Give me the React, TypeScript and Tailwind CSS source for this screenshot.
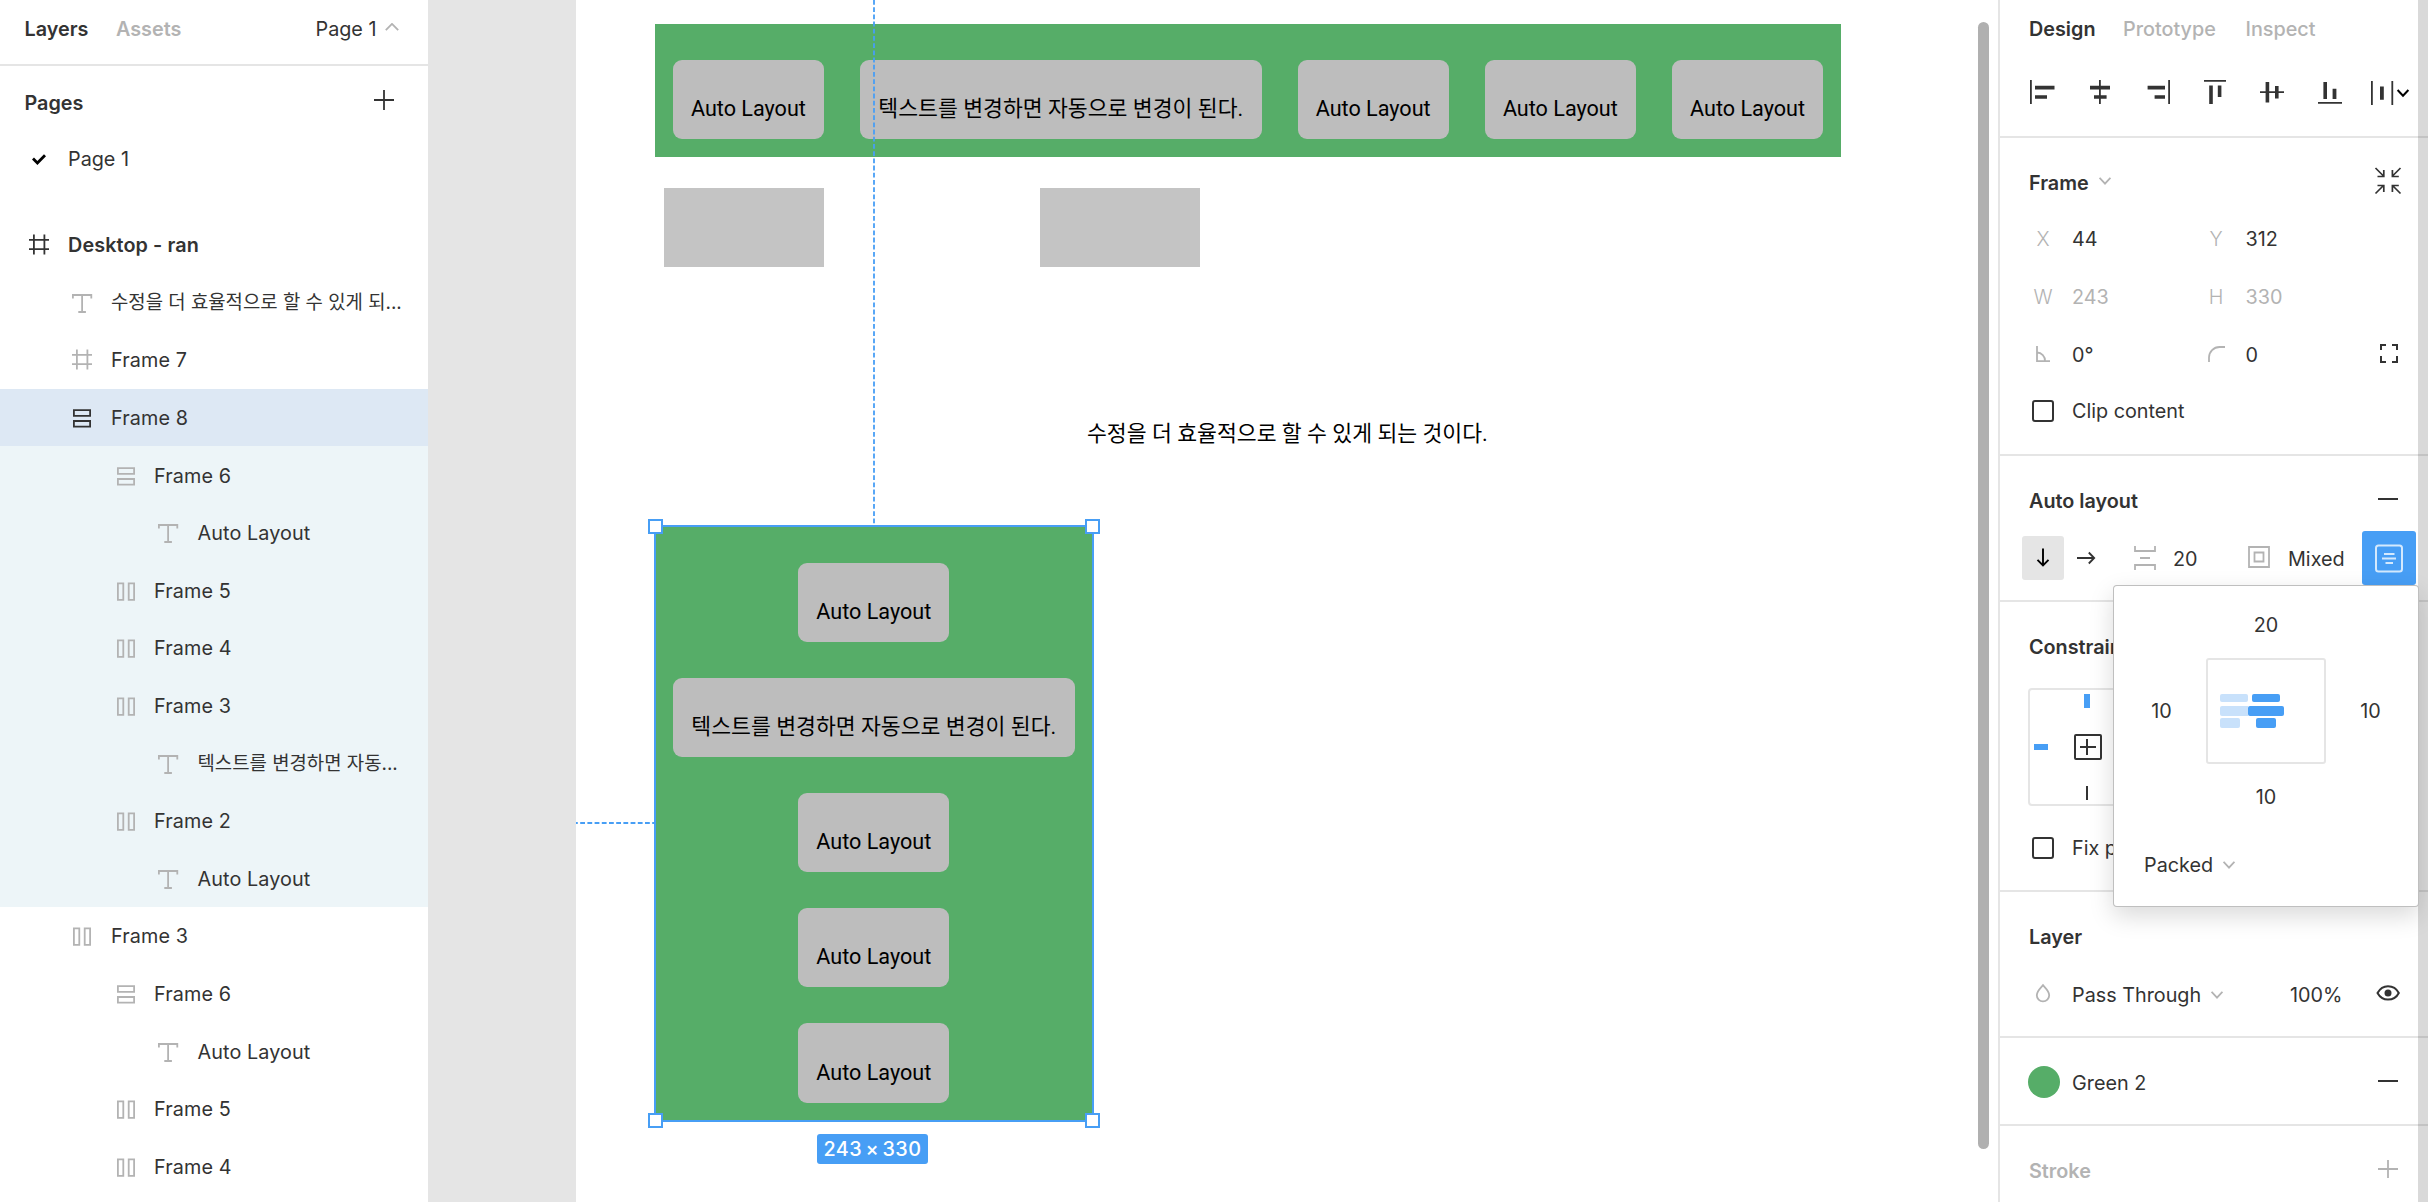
import type { ReactNode } from "react";
import clsx from "clsx";

type LayerKind = "frame" | "text" | "vertical" | "horizontal";

type LayerItem = {
  name: string;
  kind: LayerKind;
  depth: 0 | 1 | 2 | 3;
  state?: "selected" | "child";
  korean?: boolean;
};

const LAYERS: LayerItem[] = [
  { name: "Desktop - ran", kind: "frame", depth: 0 },
  { name: "수정을 더 효율적으로 할 수 있게 되...", kind: "text", depth: 1, korean: true },
  { name: "Frame 7", kind: "frame", depth: 1 },
  { name: "Frame 8", kind: "vertical", depth: 1, state: "selected" },
  { name: "Frame 6", kind: "vertical", depth: 2, state: "child" },
  { name: "Auto Layout", kind: "text", depth: 3, state: "child" },
  { name: "Frame 5", kind: "horizontal", depth: 2, state: "child" },
  { name: "Frame 4", kind: "horizontal", depth: 2, state: "child" },
  { name: "Frame 3", kind: "horizontal", depth: 2, state: "child" },
  { name: "텍스트를 변경하면 자동...", kind: "text", depth: 3, state: "child", korean: true },
  { name: "Frame 2", kind: "horizontal", depth: 2, state: "child" },
  { name: "Auto Layout", kind: "text", depth: 3, state: "child" },
  { name: "Frame 3", kind: "horizontal", depth: 1 },
  { name: "Frame 6", kind: "vertical", depth: 2 },
  { name: "Auto Layout", kind: "text", depth: 3 },
  { name: "Frame 5", kind: "horizontal", depth: 2 },
  { name: "Frame 4", kind: "horizontal", depth: 2 },
];

const INDENT = ["pl-[29px]", "pl-[72px]", "pl-[116px]", "pl-[158px]"];
const ICON_BOX = ["w-[39px]", "w-[39px]", "w-[38px]", "w-[39.5px]"];

const KOREAN_LABEL = "텍스트를 변경하면 자동으로 변경이 된다.";
const CARDS = ["Auto Layout", KOREAN_LABEL, "Auto Layout", "Auto Layout", "Auto Layout"];

/* ---------- icons ---------- */

function LayerIcon({ kind }: { kind: LayerKind }) {
  return (
    <svg width="22" height="22" viewBox="0 0 22 22" fill="none" stroke="currentColor" strokeWidth="1.8">
      {kind === "frame" && <path d="M4.9.6v20M15.4.6v20M0 5.9h20M0 15.2h20" />}
      {kind === "text" && <path d="M.9 6.6V3h18.4v3.6M10.1 3v17M6.3 20h7.6" />}
      {kind === "vertical" && <path d="M1.9 3.2h16.2v5.6H1.9zM1.9 14h16.2v5.6H1.9z" />}
      {kind === "horizontal" && <path d="M1.9 3.4h5.4v16.4H1.9zM12.7 3.4h5.4v16.4h-5.4z" />}
    </svg>
  );
}

function ChevronDown({ className }: { className?: string }) {
  return (
    <svg width="12" height="8" viewBox="0 0 12 8" fill="none" stroke="#b3b3b3" strokeWidth="1.8" className={className}>
      <path d="M.6.8 6 6.6 11.4.8" />
    </svg>
  );
}

// 36px square slot, drawings use slot coordinates
function Slot({ children, className }: { children: ReactNode; className?: string }) {
  return (
    <svg
      width="36"
      height="36"
      viewBox="0 0 36 36"
      fill="none"
      stroke="currentColor"
      strokeWidth="2"
      className={clsx("shrink-0", className)}
    >
      {children}
    </svg>
  );
}

function Minus() {
  return (
    <Slot>
      <path d="M8 16h20" />
    </Slot>
  );
}

function AlignIcons() {
  return (
    <svg width="400" height="36" viewBox="0 0 400 36" fill="#333" className="ml-[18px] shrink-0">
      <path d="M12 6h1.8v24H12zM17 11.8h19.5v3.6H17zM17 21.2h12v3.6H17z" />
      <path d="M81 6h1.8v24H81zM72 11.8h20v3.6H72zM76 21.2h12.6v3.6H76z" />
      <path d="M150.2 6h1.8v24h-1.8zM129.6 11.8H147v3.6h-17.4zM136.6 21.2H147v3.6h-10.4z" />
      <path d="M186 6h22v1.8h-22zM191.2 11.6h3.6V30h-3.6zM199.8 11.6h3.6V23h-3.6z" />
      <path d="M242 17.2h24V19h-24zM247.6 8h3.6v20.4h-3.6zM257 12h3.6v12.4H257z" />
      <path d="M300 28h24v1.8h-24zM305.4 8h3.6v17h-3.6zM314.6 14.8h3.8V25h-3.8z" />
      <path d="M353 7h1.8v24H353zM373.4 7h1.8v24h-1.8zM362 12.6h3.8v13.2H362z" />
      <path d="m379.6 16 5.4 5.8 5.4-5.8" fill="none" stroke="#000" strokeWidth="2" />
    </svg>
  );
}

/* ---------- left panel ---------- */

function LayerRow({ item }: { item: LayerItem }) {
  const dark = item.state === "selected" || item.depth === 0;
  return (
    <li
      className={clsx(
        "flex h-[57.6px] shrink-0 items-center pt-px whitespace-nowrap",
        INDENT[item.depth],
        item.state === "selected" && "bg-[#dde8f4]",
        item.state === "child" && "bg-[#edf5f8]"
      )}
    >
      <span className={clsx("shrink-0", ICON_BOX[item.depth], dark ? "text-[#333]" : "text-[#b3b3b3]")}>
        <LayerIcon kind={item.kind} />
      </span>
      <span
        className={clsx(
          item.korean ? "text-[18.85px]" : "pt-px tracking-[0.1px]",
          item.depth === 0 && "font-semibold"
        )}
      >
        {item.name}
      </span>
    </li>
  );
}

function LayersPanel() {
  return (
    <aside className="flex w-[428px] shrink-0 flex-col overflow-hidden bg-white">
      <div className="flex h-[66px] shrink-0 items-start border-b-2 border-[#e5e5e5] pl-[24.5px]">
        <div className="flex h-[58px] w-full items-center">
          <span className="w-[91.5px] font-semibold">Layers</span>
          <span className="w-[199.5px] font-semibold text-[#b3b3b3]">Assets</span>
          <span className="w-[69px]">Page 1</span>
          <svg width="14" height="8" viewBox="0 0 14 8" fill="none" stroke="#b3b3b3" strokeWidth="1.8" className="mb-1">
            <path d="M.8 7.2 7 .9l6.2 6.3" />
          </svg>
        </div>
      </div>
      <div className="flex h-[66px] shrink-0 items-center pt-2 pl-[24.5px]">
        <span className="w-[341px] font-semibold">Pages</span>
        <Slot className="-mt-1">
          <path d="M8 17h20M18 7v20" strokeWidth="1.8" />
        </Slot>
      </div>
      <div className="flex h-[54px] shrink-0 items-center pl-8">
        <svg width="14" height="11" viewBox="0 0 14 11" fill="none" stroke="#000" strokeWidth="2.8" className="mr-[22px]">
          <path d="M1 4.6 5.4 9 13 1.2" />
        </svg>
        <span>Page 1</span>
      </div>
      <ul className="mt-[30px] flex flex-col">
        {LAYERS.map((item, i) => (
          <LayerRow key={i} item={item} />
        ))}
      </ul>
    </aside>
  );
}

/* ---------- canvas ---------- */

function Card({ label }: { label: string }) {
  return (
    <div
      className={clsx(
        "flex h-[79.2px] shrink-0 items-end justify-center rounded-[9px] bg-[#bdbdbd] pb-[18px] whitespace-nowrap",
        label === KOREAN_LABEL ? "w-[401.6px]" : "w-[151.2px]"
      )}
    >
      <span className="leading-[25px]">{label}</span>
    </div>
  );
}

function Handle({ className }: { className: string }) {
  return <span className={clsx("absolute size-[15px] border-2 border-[#479ef5] bg-white", className)} />;
}

function Canvas() {
  return (
    <main className="relative min-w-0 flex-1 overflow-hidden bg-[#e5e5e5] pl-[148px] font-[Roboto,'Noto_Sans_CJK_KR',sans-serif] text-[21.6px] text-black">
      <div className="relative h-full bg-white">
        <div className="absolute top-[24.3px] left-[79px] flex h-[133.2px] w-[1186px] gap-[36px] bg-[#56ad68] pt-[36px] pl-[17.8px]">
          {CARDS.map((label, i) => (
            <Card key={i} label={label} />
          ))}
        </div>

        <div className="absolute top-[188.4px] left-[88px] h-[79px] w-[160px] bg-[#c4c4c4]" />
        <div className="absolute top-[188.4px] left-[464px] h-[79px] w-[160px] bg-[#c4c4c4]" />

        <p className="absolute top-[421px] left-[511px] leading-[25px] whitespace-nowrap">
          수정을 더 효율적으로 할 수 있게 되는 것이다.
        </p>

        {/* distance guides */}
        <svg width="2" height="526" className="absolute top-0 left-[297px]">
          <path d="M1 0v526" stroke="#479ef5" strokeWidth="1.8" strokeDasharray="4.8 2.4" />
        </svg>
        <svg width="79" height="2" className="absolute top-[822px] left-0">
          <path d="M-3 1h82" stroke="#479ef5" strokeWidth="1.8" strokeDasharray="4.8 2.4" />
        </svg>

        <div className="absolute top-[525px] left-[77.6px] flex h-[597px] w-[440.4px] flex-col items-center gap-[36px] border-2 border-[#479ef5] bg-[#56ad68] pt-[35.6px]">
          {CARDS.map((label, i) => (
            <Card key={i} label={label} />
          ))}
          <Handle className="-top-[8px] -left-[8px]" />
          <Handle className="-top-[8px] -right-[8px]" />
          <Handle className="-bottom-[8px] -left-[8px]" />
          <Handle className="-right-[8px] -bottom-[8px]" />
        </div>
        <div className="absolute top-[1133.5px] left-[241px] flex h-[30.5px] w-[111px] items-center justify-center rounded-[3px] bg-[#479ef5] pt-0.5 font-[Inter] text-[19.8px] font-medium tracking-[0.5px] text-white [word-spacing:-2.5px]">
          243 × 330
        </div>

        <div className="absolute top-[22px] right-[9px] h-[1127px] w-[11px] rounded-full bg-[#b0b0b0]" />
      </div>
    </main>
  );
}

/* ---------- right panel ---------- */

function Section({ children, className }: { children: ReactNode; className?: string }) {
  return <section className={clsx("shrink-0 border-[#e5e5e5] pt-4", className)}>{children}</section>;
}

function Title({ children, action, muted }: { children: ReactNode; action?: ReactNode; muted?: boolean }) {
  return (
    <div className={clsx("flex h-[58px] items-center pl-[29px]", muted && "text-[#b3b3b3]")}>
      <div className="flex w-[341px] items-center font-semibold">{children}</div>
      {action}
    </div>
  );
}

type FieldRowProps = {
  left: [ReactNode, string];
  right: [ReactNode, string];
  muted?: boolean;
  action?: ReactNode;
  className: string;
};

function FieldRow({ left, right, muted, action, className }: FieldRowProps) {
  return (
    <div className={clsx("flex items-center pl-[25px]", muted && "text-[#b3b3b3]", className)}>
      <span className="flex w-9 justify-center font-light text-[#b3b3b3]">{left[0]}</span>
      <span className="ml-[11px] w-[126px]">{left[1]}</span>
      <span className="flex w-9 justify-center font-light text-[#b3b3b3]">{right[0]}</span>
      <span className="ml-[11.5px] w-[124.5px]">{right[1]}</span>
      {action}
    </div>
  );
}

function CheckRow({ label, className }: { label: string; className?: string }) {
  return (
    <div className={clsx("flex h-[58px] items-center pl-8 whitespace-nowrap", className)}>
      <span className="mr-[18px] size-[22px] shrink-0 rounded-[3px] border-2 border-[#333]" />
      {label}
    </div>
  );
}

function PaddingPopover() {
  return (
    <div className="absolute top-[585px] left-[113px] flex h-[322px] w-[306px] flex-col rounded-[4px] border border-black/25 bg-white shadow-[0_9px_25px_rgba(0,0,0,0.15)]">
      <div className="mt-[25px] flex h-[29px] items-center justify-center">20</div>
      <div className="mt-[18px] flex items-center">
        <span className="w-[91px] pl-[4px] text-center">10</span>
        <div className="ml-px flex h-[106px] w-[120px] flex-col gap-y-0.5 rounded-[3px] border-2 border-[#e5e5e5] pt-[34px] pl-3">
          <div className="flex h-2 gap-1">
            <i className="w-7 rounded-[2px] bg-[#c8e1fb]" />
            <i className="w-7 rounded-[2px] bg-[#479ef5]" />
          </div>
          <div className="mt-0.5 flex h-[10px]">
            <i className="w-7 rounded-l-[2px] bg-[#c8e1fb]" />
            <i className="w-9 rounded-[2px] bg-[#479ef5]" />
          </div>
          <div className="flex h-[10px] gap-4">
            <i className="w-5 rounded-[2px] bg-[#c8e1fb]" />
            <i className="w-5 rounded-[2px] bg-[#479ef5]" />
          </div>
        </div>
        <span className="w-[91px] pr-0.5 text-center">10</span>
      </div>
      <div className="mt-[19px] flex h-[29px] items-center justify-center">10</div>
      <div className="mt-[39px] flex h-[29px] items-center pl-[30px]">
        <span className="w-[79px]">Packed</span>
        <ChevronDown className="-mt-0.5" />
      </div>
    </div>
  );
}

function DesignPanel() {
  return (
    <aside className="relative flex w-[430px] shrink-0 flex-col overflow-hidden border-l-2 border-[#e5e5e5] bg-white">
      <section className="h-[138px] shrink-0 border-b-2 border-[#e5e5e5]">
        <div className="flex h-[58px] items-center pl-[29px] font-semibold">
          <span className="w-[94px]">Design</span>
          <span className="w-[122.5px] font-medium text-[#b3b3b3]">Prototype</span>
          <span className="font-medium text-[#b3b3b3]">Inspect</span>
        </div>
        <div className="flex h-[68px] items-center">
          <AlignIcons />
        </div>
      </section>

      <Section className="h-[318px] border-b-2">
        <Title
          action={
            <Slot className="text-[#333]">
              <path
                d="m5.500 3 8 8M13.800 5v6.500H7.500M30.500 3l-8 8M22.400 5v6.500h6.400M5.500 28.500l8-8M13.800 27v-6.500H7.500M30.500 28.500l-8-8M22.400 27v-6.500h6.400"
                strokeWidth="1.7"
              />
            </Slot>
          }
        >
          <span className="w-[70px]">Frame</span>
          <ChevronDown className="-mt-1" />
        </Title>
        <FieldRow className="h-[54px]" left={["X", "44"]} right={["Y", "312"]} />
        <FieldRow className="h-[62px]" left={["W", "243"]} right={["H", "330"]} muted />
        <FieldRow
          className="h-[54px]"
          left={[
            <Slot key="angle">
              <path d="M12 9v15.200h13M12 15.500a8 8 0 0 1 8 8.500" strokeWidth="1.8" />
            </Slot>,
            "0°",
          ]}
          right={[
            <Slot key="radius">
              <path d="M11 25v-4.500a10.500 10.500 0 0 1 10.500-10.500H27" strokeWidth="1.8" />
            </Slot>,
            "0",
          ]}
          action={
            <Slot>
              <path d="M11 13V8h5M22 8h5v5M27 19v6h-5M16 25h-5v-6" />
            </Slot>
          }
        />
        <CheckRow label="Clip content" />
      </Section>

      <Section className="h-[146px] border-b-2">
        <Title action={<Minus />}>Auto layout</Title>
        <div className="flex h-[56px] items-center pl-[22px]">
          <span className="flex h-11 w-[42px] items-center justify-center rounded-[3px] bg-[#e5e5e5] text-black">
            <Slot>
              <path d="M18 8.500v17M12.500 19.800l5.500 5.700 5.500-5.700" strokeWidth="1.9" />
            </Slot>
          </span>
          <Slot className="ml-1">
            <path d="M9 18h17M20.800 12.500l5.400 5.500-5.400 5.500" strokeWidth="1.8" />
          </Slot>
          <Slot className="ml-[23px] text-[#b3b3b3]">
            <path d="M8 6v5h20V6M8 30v-5h20v5M13 18h10" strokeWidth="1.8" />
          </Slot>
          <span className="ml-[10px] w-[67px] pt-0.5">20</span>
          <Slot className="text-[#b3b3b3]">
            <path d="M9 7h20v20H9zM14.500 12.500h9v9h-9z" strokeWidth="1.8" />
          </Slot>
          <span className="ml-[12px] w-[74px] pt-0.5">Mixed</span>
          <span className="flex size-[54px] items-center justify-center rounded-[3px] bg-[#479ef5] text-[#d4e9fd]">
            <Slot>
              <rect x="5" y="5.5" width="26" height="26" rx="2.5" />
              <path d="M13 14h10.500M11 18.500h14M14.500 23h7.500" strokeWidth="1.8" />
            </Slot>
          </span>
        </div>
      </Section>

      <Section className="h-[290px] border-b-2">
        <Title>Constraints</Title>
        <div className="mt-3 ml-7 h-[118px] w-[118px] rounded-[4px] border-2 border-[#e5e5e5]">
          <svg width="114" height="114" viewBox="0 0 114 114" fill="none" stroke="#333" strokeWidth="2">
            <path d="M54 4h6v14h-6zM4 54h14v6H4z" fill="#479ef5" stroke="none" />
            <rect x="45" y="45" width="26" height="24" rx="1" />
            <path d="M50 57h16M57 49v16M57 96v14" />
          </svg>
        </div>
        <CheckRow label="Fix position when scrolling" className="mt-[13px]" />
      </Section>

      <Section className="h-[146px] border-b-2">
        <Title>Layer</Title>
        <div className="flex h-[58px] items-center pl-[25px]">
          <Slot className="text-[#b3b3b3]">
            <path d="M18 8.200c-2.600 3-6.200 6-6.200 10a6.200 6.200 0 0 0 12.400 0c0-4-3.600-7-6.200-10z" strokeWidth="1.8" />
          </Slot>
          <span className="ml-[11px] w-[139px]">Pass Through</span>
          <ChevronDown />
          <span className="ml-[67px] w-20">100%</span>
          <Slot>
            <path d="M7.500 16C10 11.500 13.500 9.200 18 9.200S26.500 11.500 28.800 16C26.500 20.500 22.500 22.600 18 22.600S10 20.500 7.500 16z" />
            <circle cx="18" cy="16" r="3.5" fill="#333" stroke="none" />
          </Slot>
        </div>
      </Section>

      <Section className="h-[88px] border-b-2">
        <div className="flex h-[58px] items-center pl-7">
          <span className="-mt-0.5 mr-[12px] size-8 rounded-full bg-[#56ad68]" />
          <span className="w-[298px]">Green 2</span>
          <Minus />
        </div>
      </Section>

      <Section>
        <Title
          muted
          action={
            <Slot>
              <path d="M8 16h20M18 7v18" strokeWidth="1.8" />
            </Slot>
          }
        >
          Stroke
        </Title>
      </Section>

      {/* scrollbar track */}
      <div className="absolute top-0 right-0 h-full w-[10px] bg-black/15" />
      <PaddingPopover />
    </aside>
  );
}

export default function App() {
  return (
    <div className="flex h-[1202px] w-[2428px] overflow-hidden bg-white font-[Inter,'Noto_Sans_CJK_KR',sans-serif] text-[19.8px] leading-[29px] text-[#333]">
      <LayersPanel />
      <Canvas />
      <DesignPanel />
    </div>
  );
}
